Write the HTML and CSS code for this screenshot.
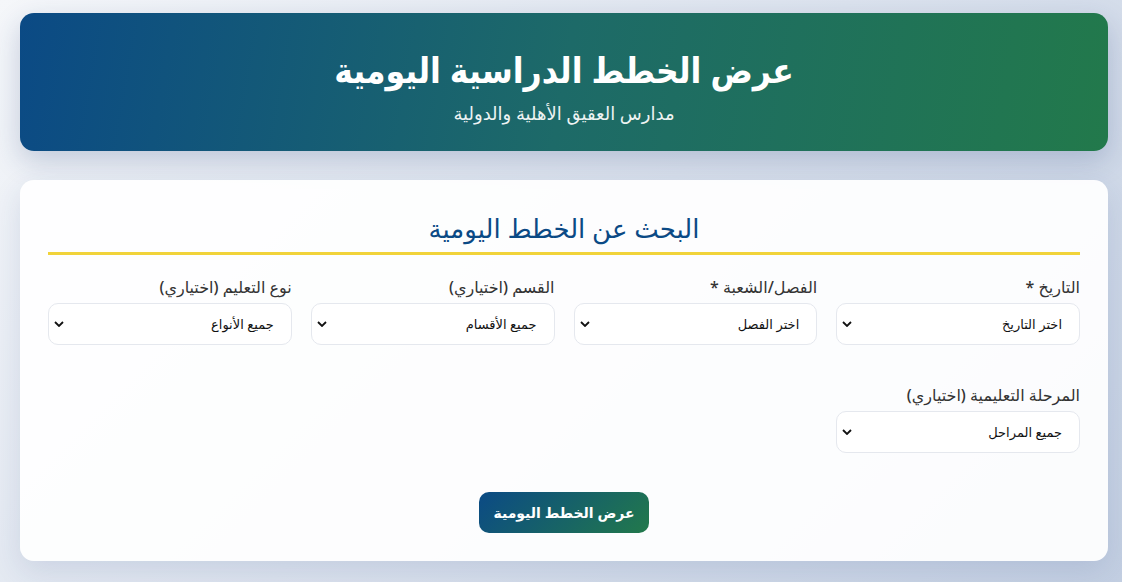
FILE: index.html
```html
<!DOCTYPE html>
<html lang="ar" dir="rtl">
<head>
<meta charset="utf-8">
<title>عرض الخطط الدراسية اليومية</title>
<link rel="stylesheet" href="styles.css">
</head>
<body>
<div class="container">
  <header class="hero">
    <h1 class="hero-title">عرض الخطط الدراسية اليومية</h1>
    <p class="hero-sub">مدارس العقيق الأهلية والدولية</p>
  </header>
  <section class="card">
    <h2 class="card-title">البحث عن الخطط اليومية</h2>
    <div class="grid">
      <div class="field">
        <label class="label">التاريخ *</label>
        <div class="select"><span>اختر التاريخ</span><svg class="chev" viewBox="0 0 10 6" width="10" height="6"><path d="M1 1l4 4 4-4" fill="none" stroke="#111" stroke-width="1.8"/></svg></div>
      </div>
      <div class="field">
        <label class="label">الفصل/الشعبة *</label>
        <div class="select"><span>اختر الفصل</span><svg class="chev" viewBox="0 0 10 6" width="10" height="6"><path d="M1 1l4 4 4-4" fill="none" stroke="#111" stroke-width="1.8"/></svg></div>
      </div>
      <div class="field">
        <label class="label">القسم (اختياري)</label>
        <div class="select"><span>جميع الأقسام</span><svg class="chev" viewBox="0 0 10 6" width="10" height="6"><path d="M1 1l4 4 4-4" fill="none" stroke="#111" stroke-width="1.8"/></svg></div>
      </div>
      <div class="field">
        <label class="label">نوع التعليم (اختياري)</label>
        <div class="select"><span>جميع الأنواع</span><svg class="chev" viewBox="0 0 10 6" width="10" height="6"><path d="M1 1l4 4 4-4" fill="none" stroke="#111" stroke-width="1.8"/></svg></div>
      </div>
      <div class="field">
        <label class="label">المرحلة التعليمية (اختياري)</label>
        <div class="select"><span>جميع المراحل</span><svg class="chev" viewBox="0 0 10 6" width="10" height="6"><path d="M1 1l4 4 4-4" fill="none" stroke="#111" stroke-width="1.8"/></svg></div>
      </div>
    </div>
    <div class="actions">
      <button class="btn">عرض الخطط اليومية</button>
    </div>
  </section>
</div>
</body>
</html>
```

FILE: styles.css
```css
* { box-sizing: border-box; }
html, body { height: 100%; }
body {
  margin: 0;
  font-family: "Noto Sans", "DejaVu Sans", sans-serif;
  background: linear-gradient(135deg, #f5f7fa 0%, #c3cfe2 100%);
  color: #333;
}
.container {
  padding: 13px 14px 20px 20px;
}
.hero {
  height: 138px;
  border-radius: 14px;
  background: linear-gradient(100deg, #0b4a85 0%, #1d6a68 50%, #22794b 100%);
  color: #fff;
  text-align: center;
  padding-top: 34px;
  box-shadow: 0 10px 28px rgba(30, 60, 120, 0.22);
}
.hero-title {
  margin: 0;
  font-size: 35px;
  font-weight: 700;
  font-stretch: 85%;
  line-height: 46px;
}
.hero-sub {
  margin: 8px 0 0;
  font-size: 18px;
  line-height: 24px;
  opacity: 0.92;
}
.card {
  margin-top: 29px;
  background: rgba(255, 255, 255, 0.93);
  border-radius: 14px;
  padding: 30px 28px 28px;
  box-shadow: 0 10px 30px rgba(30, 60, 120, 0.12);
}
.card-title {
  margin: 0;
  text-align: center;
  color: #0b4a85;
  font-size: 26px;
  font-weight: 500;
  line-height: 36px;
  padding-bottom: 6px;
  border-bottom: 3px solid #f1d33a;
}
.grid {
  display: grid;
  grid-template-columns: repeat(4, 1fr);
  column-gap: 19px;
  row-gap: 39px;
  margin-top: 21px;
}
.field { display: flex; flex-direction: column; }
.label {
  font-size: 16px;
  font-weight: 500;
  color: #333;
  line-height: 22px;
  margin-bottom: 5px;
}
.select {
  height: 42px;
  background: #fff;
  border: 1px solid #e5e8ee;
  border-radius: 10px;
  display: flex;
  align-items: center;
  justify-content: space-between;
  padding: 0 17px 0 5px;
  font-family: "Liberation Sans", "DejaVu Sans", sans-serif;
  font-size: 13px;
  color: #111;
}
.chev { display: block; }
.actions {
  display: flex;
  justify-content: center;
  margin-top: 39px;
}
.btn {
  width: 170px;
  height: 41px;
  border: none;
  border-radius: 10px;
  background: linear-gradient(135deg, #0b4a85 0%, #22794b 100%);
  color: #fff;
  font-family: "Liberation Sans", "DejaVu Sans", sans-serif;
  font-weight: 700;
  font-size: 14px;
}
```
